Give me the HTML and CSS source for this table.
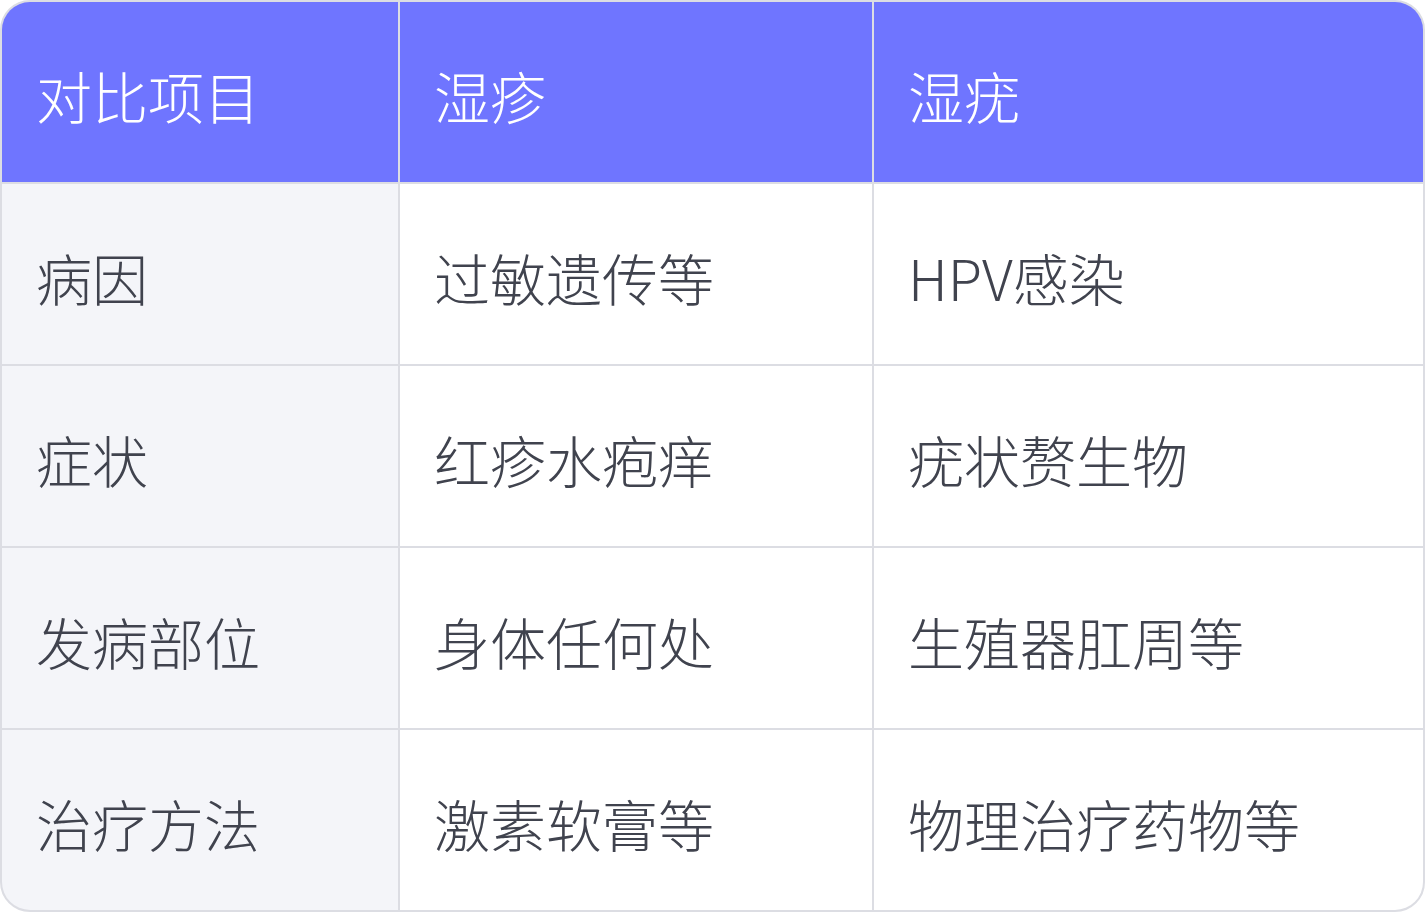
FILE: index.html
```html
<!DOCTYPE html>
<html lang="zh-CN">
<head>
<meta charset="utf-8">
<title>湿疹与湿疣对比</title>
<link rel="stylesheet" href="styles.css">
</head>
<body>
<div class="table">
  <div class="cell head">对比项目</div>
  <div class="cell head">湿疹</div>
  <div class="cell head">湿疣</div>

  <div class="cell label">病因</div>
  <div class="cell">过敏遗传等</div>
  <div class="cell">HPV感染</div>

  <div class="cell label">症状</div>
  <div class="cell">红疹水疱痒</div>
  <div class="cell">疣状赘生物</div>

  <div class="cell label">发病部位</div>
  <div class="cell">身体任何处</div>
  <div class="cell">生殖器肛周等</div>

  <div class="cell label">治疗方法</div>
  <div class="cell">激素软膏等</div>
  <div class="cell">物理治疗药物等</div>
</div>
</body>
</html>
```
FILE: styles.css
```css
html, body {
  margin: 0;
  padding: 0;
  background: #ffffff;
}
.table {
  width: 1425px;
  height: 912px;
  box-sizing: border-box;
  border: 2px solid #dcdde3;
  border-radius: 30px;
  overflow: hidden;
  display: grid;
  grid-template-columns: 396px 472px 1fr;
  grid-template-rows: repeat(5, 1fr);
  gap: 2px;
  background: #dcdde3;
  font-family: "Noto Sans CJK SC", "Noto Sans", sans-serif;
  font-weight: 300;
  font-size: 56px;
  color: #40434e;
}
.cell {
  display: flex;
  align-items: center;
  padding: 6px 0 0 34px;
  box-sizing: border-box;
  background: #ffffff;
  line-height: 1;
}
.cell.head {
  background: #6f75ff;
  color: #ffffff;
}
.cell.label {
  background: #f4f5f9;
}
```
